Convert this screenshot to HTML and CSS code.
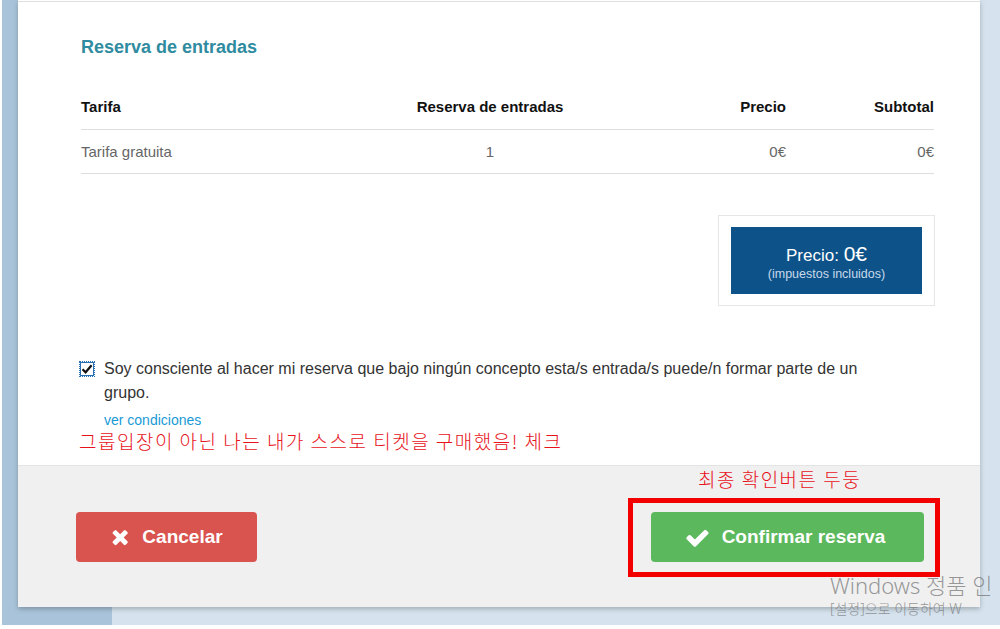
FILE: index.html
```html
<!doctype html>
<html lang="es">
<head>
    <meta charset="UTF-8">
    <title>Reserva de entradas</title>
    <link rel="stylesheet" href="styles.css">
</head>
<body>
<div class="page">
    <div class="sidebar"></div>
    <div class="main"></div>

    <div class="modal">
        <div class="modal-top"></div>
        <div class="modal-body">
            <h2 class="title">Reserva de entradas</h2>
            <table class="tarifas">
                <thead>
                    <tr>
                        <th class="c-tarifa">Tarifa</th>
                        <th class="c-num">Reserva de entradas</th>
                        <th class="c-precio">Precio</th>
                        <th class="c-sub">Subtotal</th>
                    </tr>
                </thead>
                <tbody>
                    <tr>
                        <td class="c-tarifa">Tarifa gratuita</td>
                        <td class="c-num">1</td>
                        <td class="c-precio">0€</td>
                        <td class="c-sub">0€</td>
                    </tr>
                </tbody>
            </table>

            <div class="total-row">
                <div class="total-box">
                    <div class="total">
                        <div class="total-price">Precio: <span class="amount">0€</span></div>
                        <div class="total-note">(impuestos incluidos)</div>
                    </div>
                </div>
            </div>

            <label class="accept">
                <span class="check">
                    <svg width="14" height="14" viewBox="0 0 14 14"><path d="M2.5 7.2 L5.6 10.3 L11.6 3.2" fill="none" stroke="#111" stroke-width="2.2"/></svg>
                </span>
                <span class="accept-text">Soy consciente al hacer mi reserva que bajo ningún concepto esta/s entrada/s puede/n formar parte de un grupo.</span>
            </label>
            <a class="conditions" href="javascript:;">ver condiciones</a>
            <div class="note note-check">그룹입장이 아닌 나는 내가 스스로 티켓을 구매했음! 체크</div>
        </div>

        <div class="modal-footer">
            <a href="javascript:;" class="btn btn-cancel">
                <svg width="18" height="18" viewBox="0 0 1408 1408"><path fill="#fff" d="M1390 1114q0 40-28 68l-136 136q-28 28-68 28t-68-28l-294-294-294 294q-28 28-68 28t-68-28l-136-136q-28-28-28-68t28-68l294-294-294-294q-28-28-28-68t28-68l136-136q28-28 68-28t68 28l294 294 294-294q28-28 68-28t68 28l136 136q28 28 28 68t-28 68l-294 294 294 294q28 28 28 68z"/></svg>
                Cancelar
            </a>
            <div class="confirm-wrap">
                <a href="javascript:;" class="btn btn-confirm">
                    <svg width="23" height="19" viewBox="100 350 1600 1050"><path fill="#fff" d="M1671 566q0 40-28 68l-724 724-136 136q-28 28-68 28t-68-28l-136-136-362-362q-28-28-28-68t28-68l136-136q28-28 68-28t68 28l294 295 656-657q28-28 68-28t68 28l136 136q28 28 28 68z"/></svg>
                    Confirmar reserva
                </a>
                <div class="note note-confirm">최종 확인버튼 두둥</div>
                <div class="highlight"></div>
            </div>
        </div>
    </div>

    <div class="watermark">
        <div class="wm-big">Windows 정품 인</div>
        <div class="wm-small">[설정]으로 이동하여 W</div>
    </div>
</div>
</body>
</html>
```

FILE: styles.css
```css
* {margin: 0; padding: 0; box-sizing: border-box;}
html, body {width: 1000px; height: 629px; overflow: hidden; background: #fff;}
body {font-family: "Liberation Sans", Arial, sans-serif; color: #333;}
a {text-decoration: none;}

.page {position: relative; display: flex; height: 625px; margin-left: 2px;}
.sidebar {width: 110px; background: #a9c4da;}
.main {flex: 1; background: #d6e3ee;}

/* modal dialog over the page */
.modal {position: absolute; top: 0; left: 16px; width: 962px; height: 607px; background: #fff; box-shadow: 0 2px 5px rgba(0,0,0,.25); display: flex; flex-direction: column;}
.modal-top {height: 1px; margin-top: 1px; background: #dfdfdf;}
.modal-body {flex: 1; padding: 34px 46px 0 63px;}

.title {font-size: 18px; line-height: 22px; color: #2f8b9f; font-weight: bold;}

.tarifas {width: 100%; border-collapse: collapse; margin-top: 27px; font-size: 15px;}
.tarifas th {height: 44px; border-bottom: 1px solid #dedede; color: #111; font-weight: bold; padding-top: 0;}
.tarifas td {height: 44px; border-bottom: 1px solid #dedede; color: #666;}
.c-tarifa {text-align: left; width: 261px;}
.c-num {text-align: center; width: 296px;}
.c-precio {text-align: right; width: 148px;}
.c-sub {text-align: right; width: 148px;}

.total-row {display: flex; justify-content: flex-end; margin-top: 41px; margin-right: -1px;}
.total-box {width: 217px; height: 91px; border: 1px solid #e6e6e6; padding: 11px 12px;}
.total {height: 67px; background: #0d5389; color: #fff; text-align: center; padding-top: 16px;}
.total-price {font-size: 17px; line-height: 22px;}
.total-price .amount {font-size: 21px;}
.total-note {font-size: 12.5px; line-height: 15px; color: #c9d9ea;}

.accept {display: flex; margin-top: 51px; margin-left: -1px; font-size: 16px; line-height: 24px; color: #333;}
.check {flex: none; width: 14px; height: 14px; margin-top: 5px; margin-right: 10px; border: 1px solid #2a6fb4; outline: 1px dotted #2a6fb4; background: #fff; display: flex;}
.check svg {margin: -1px;}
.accept-text {width: 760px;}
.conditions {display: block; margin: 6px 0 0 23px; font-size: 14px; line-height: 18px; color: #199ad6;}

.note {font-family: "Noto Sans CJK KR", sans-serif; color: #e8121b; font-size: 19px; letter-spacing: 1.5px; line-height: 22px; font-weight: 300;}
.note-check {margin-top: 1px; margin-left: -2px;}

.modal-footer {height: 142px; background: #f0f0f0; border-top: 1px solid #e4e4e4; display: flex; justify-content: space-between; align-items: flex-start; padding: 46px 56px 0 58px;}
.btn {display: flex; align-items: center; justify-content: center; gap: 14px; height: 50px; border-radius: 4px; color: #fff; font-size: 19px; font-weight: bold;}
.btn-cancel {width: 181px; background: #d9534f; padding-right: 0;}
.btn-confirm {width: 273px; background: #5cb85c; gap: 13px; padding-right: 4px;}

.confirm-wrap {position: relative;}
.note-confirm {position: absolute; top: -44px; left: 47px; white-space: nowrap;}
.highlight {position: absolute; top: -14px; left: -23px; width: 312px; height: 79px; border: 5px solid #f30000;}

.watermark {position: absolute; left: 828px; top: 571px; white-space: nowrap; font-family: "Noto Sans", "Noto Sans CJK KR", sans-serif; color: rgba(110,110,110,.7); font-weight: 300;}
.wm-big {font-size: 22px; line-height: 28px;}
.wm-small {font-size: 14px; line-height: 19px;}
```
